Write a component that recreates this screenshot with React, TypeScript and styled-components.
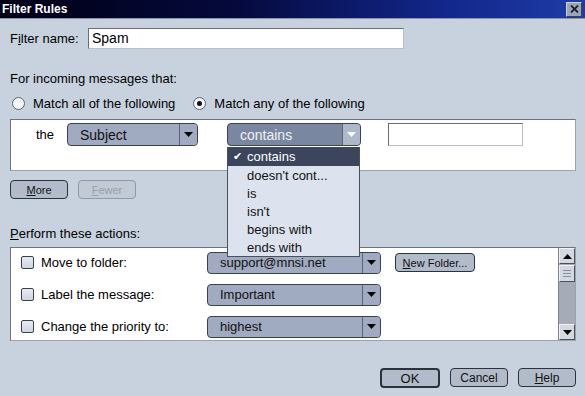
import React from 'react';
import styled, { createGlobalStyle } from 'styled-components';

const GlobalStyle = createGlobalStyle`
  html, body {
    margin: 0;
    padding: 0;
    background: #c7d2de;
  }
`;

const Window = styled.div`
  position: relative;
  width: 585px;
  height: 396px;
  background: #c7d2de;
  font-family: "Liberation Sans", Arial, sans-serif;
  font-size: 13px;
  color: #000;
  overflow: hidden;
`;

const TitleBar = styled.div`
  height: 18px;
  display: flex;
  align-items: center;
  justify-content: space-between;
  padding: 0 3px 0 2px;
  background: linear-gradient(to right, #000014 0%, #05093c 40%, #12268a 75%, #1e3ca6 100%);
  border-bottom: 1px solid #8a96a8;
`;

const Title = styled.span`
  color: #fff;
  font-weight: bold;
  font-size: 12px;
`;

const CloseBox = styled.div`
  width: 14px;
  height: 13px;
  background: #9aa6b4;
  border: 1px solid #c8d0da;
  border-right-color: #3a4250;
  border-bottom-color: #3a4250;
  display: flex;
  align-items: center;
  justify-content: center;
`;

const Body = styled.div`
  padding: 0 9px 0 10px;
  display: flex;
  flex-direction: column;
`;

const NameRow = styled.div`
  margin-top: 9px;
  display: flex;
  align-items: center;
  height: 20px;
`;

const NameLabel = styled.span`
  width: 78px;
`;

const TextBox = styled.div<{ $w: number; $h: number }>`
  width: ${p => p.$w}px;
  height: ${p => p.$h}px;
  box-sizing: border-box;
  background: #fff;
  border: 1px solid #6a6e74;
  border-right-color: #b8c0cc;
  border-bottom-color: #b8c0cc;
  display: flex;
  align-items: center;
  padding-left: 3px;
  font-size: 14px;
`;

const SectionLabel = styled.div<{ $top: number }>`
  margin-top: ${p => p.$top}px;
  height: 18px;
  line-height: 18px;
`;

const RadioRow = styled.div`
  height: 18px;
  margin-top: 6px;
  display: flex;
  align-items: center;
`;

const RadioItem = styled.label`
  display: flex;
  align-items: center;
  gap: 8px;
  margin-left: 2px;
  margin-right: 16px;
`;

const RadioCircle = styled.span<{ $on?: boolean }>`
  width: 11px;
  height: 11px;
  border-radius: 50%;
  border: 1px solid #5a6270;
  background: #f4f6fa;
  display: flex;
  align-items: center;
  justify-content: center;
  &::after {
    content: '';
    display: ${p => (p.$on ? 'block' : 'none')};
    width: 5px;
    height: 5px;
    border-radius: 50%;
    background: #111;
  }
`;

const ConditionBox = styled.div`
  margin-top: 7px;
  height: 52px;
  box-sizing: border-box;
  background: #fff;
  border: 1px solid #6e747c;
  border-right-color: #9aa2ac;
  border-bottom-color: #9aa2ac;
  padding: 3px 0 0 25px;
  display: flex;
  align-items: flex-start;
  position: relative;
`;

const TheLabel = styled.span`
  width: 31px;
  height: 23px;
  line-height: 23px;
`;

const Dropdown = styled.div<{ $w: number; $active?: boolean; $h?: number; $fs?: number }>`
  width: ${p => p.$w}px;
  height: ${p => p.$h ?? 23}px;
  box-sizing: border-box;
  display: flex;
  border: 1px solid #3c424c;
  border-radius: 4px;
  background: ${p => (p.$active ? '#7a87a0' : '#a0aac0')};
  color: ${p => (p.$active ? '#eef1f7' : '#111')};
  font-size: ${p => p.$fs ?? 14}px;
  overflow: hidden;
`;

const DropText = styled.span`
  flex: 1;
  padding-left: 12px;
  display: flex;
  align-items: center;
  white-space: nowrap;
  overflow: hidden;
`;

const DropArrow = styled.span<{ $active?: boolean }>`
  width: 17px;
  border-left: 1px solid ${p => (p.$active ? '#5a6478' : '#5c6474')};
  background: ${p => (p.$active ? '#aeb8cc' : '#a0aac0')};
  display: flex;
  align-items: center;
  justify-content: center;
`;

const Menu = styled.div`
  position: absolute;
  left: 227px;
  top: 147px;
  width: 133px;
  box-sizing: border-box;
  background: #dde2ef;
  border: 1px solid #4a505c;
  border-top: none;
  z-index: 5;
  font-size: 13px;
`;

const MenuItem = styled.div<{ $sel?: boolean }>`
  height: 18px;
  display: flex;
  align-items: center;
  padding-left: 5px;
  background: ${p => (p.$sel ? '#3b465c' : 'transparent')};
  color: ${p => (p.$sel ? '#fff' : '#111')};
  &:first-child {
    height: 19px;
  }
`;

const CheckSlot = styled.span`
  width: 14px;
  font-size: 11px;
`;

const ButtonRow = styled.div`
  margin-top: 9px;
  display: flex;
  gap: 10px;
  height: 19px;
`;

const Btn = styled.div<{ $w: number; $disabled?: boolean; $default?: boolean; $fs?: number }>`
  width: ${p => p.$w}px;
  height: ${p => (p.$default ? 20 : 19)}px;
  box-sizing: border-box;
  border: ${p => (p.$default ? 2 : 1)}px solid ${p => (p.$disabled ? '#9098a4' : '#2c323c')};
  border-radius: 4px;
  background: ${p => (p.$disabled ? '#c2cad6' : '#b2bbca')};
  color: ${p => (p.$disabled ? '#98a0ac' : '#111')};
  display: flex;
  align-items: center;
  justify-content: center;
  font-size: ${p => p.$fs ?? 12}px;
  white-space: nowrap;
`;

const U = styled.span`
  text-decoration: underline;
`;

const ActionsBox = styled.div`
  margin-top: 4px;
  height: 94px;
  width: 566px;
  box-sizing: border-box;
  background: #fff;
  border: 1px solid #6e747c;
  border-right-color: #9aa2ac;
  border-bottom-color: #9aa2ac;
  display: flex;
`;

const ActionList = styled.div`
  flex: 1;
  padding: 4px 0 0 10px;
  display: flex;
  flex-direction: column;
  gap: 11px;
`;

const ActionRow = styled.div`
  height: 21px;
  display: flex;
  align-items: center;
`;

const CheckBox = styled.span`
  width: 13px;
  height: 13px;
  box-sizing: border-box;
  border: 1px solid #3c4048;
  border-radius: 2px;
  background: linear-gradient(#e6eaf0, #cfd6e0);
  margin-right: 7px;
`;

const ActionLabel = styled.span`
  width: 166px;
  font-size: 13px;
`;

const NewFolderBtn = styled(Btn)`
  margin-left: 14px;
`;

const ScrollBar = styled.div`
  width: 16px;
  display: flex;
  flex-direction: column;
  background: #a6abb8;
  border-left: 1px solid #7a808c;
`;

const ScrollBtn = styled.div`
  height: 16px;
  box-sizing: border-box;
  background: #d4d8e0;
  border: 1px solid #f0f2f6;
  border-right-color: #4a505c;
  border-bottom-color: #4a505c;
  display: flex;
  align-items: center;
  justify-content: center;
`;

const Thumb = styled(ScrollBtn)`
  height: 17px;
  margin-top: 1px;
  flex-direction: column;
  gap: 2px;
`;

const Grip = styled.span`
  width: 8px;
  height: 1px;
  background: #8a909c;
`;

const Track = styled.div`
  flex: 1;
`;

const Footer = styled.div`
  margin-top: 27px;
  display: flex;
  justify-content: flex-end;
  gap: 10px;
`;

const Arrow = ({ color = '#000', up = false }: { color?: string; up?: boolean }) => (
  <svg width="9" height="5" viewBox="0 0 9 5">
    <polygon points={up ? '0,5 9,5 4.5,0' : '0,0 9,0 4.5,5'} fill={color} />
  </svg>
);

const App: React.FC = () => {
  const ops = ['contains', "doesn't cont...", 'is', "isn't", 'begins with', 'ends with'];
  const actions = [
    { label: 'Move to folder:', value: 'support@mnsi.net', folder: true },
    { label: 'Label the message:', value: 'Important' },
    { label: 'Change the priority to:', value: 'highest' },
  ];
  return (
    <Window>
      <GlobalStyle />
      <TitleBar>
        <Title>Filter Rules</Title>
        <CloseBox>
          <svg width="9" height="8" viewBox="0 0 9 8">
            <path d="M1 0.5 L8 7.5 M8 0.5 L1 7.5" stroke="#1c2230" strokeWidth="1.8" />
          </svg>
        </CloseBox>
      </TitleBar>
      <Body>
        <NameRow>
          <NameLabel>F<U>i</U>lter name:</NameLabel>
          <TextBox $w={316} $h={21}>Spam</TextBox>
        </NameRow>
        <SectionLabel $top={22}>For incoming messages that:</SectionLabel>
        <RadioRow>
          <RadioItem>
            <RadioCircle />
            Match all of the following
          </RadioItem>
          <RadioItem>
            <RadioCircle $on />
            Match any of the following
          </RadioItem>
        </RadioRow>
        <ConditionBox>
          <TheLabel>the</TheLabel>
          <Dropdown $w={131}>
            <DropText>Subject</DropText>
            <DropArrow>
              <Arrow />
            </DropArrow>
          </Dropdown>
          <Dropdown $w={134} $active style={{ marginLeft: 29 }}>
            <DropText>contains</DropText>
            <DropArrow $active>
              <Arrow color="#fff" />
            </DropArrow>
          </Dropdown>
          <TextBox $w={135} $h={23} style={{ marginLeft: 27 }} />
        </ConditionBox>
        <ButtonRow>
          <Btn $w={58} $fs={11}>
            <U>M</U>ore
          </Btn>
          <Btn $w={58} $fs={11} $disabled>
            <U>F</U>ewer
          </Btn>
        </ButtonRow>
        <SectionLabel $top={26}>
          <U>P</U>erform these actions:
        </SectionLabel>
        <ActionsBox>
          <ActionList>
            {actions.map(a => (
              <ActionRow key={a.label}>
                <CheckBox />
                <ActionLabel>{a.label}</ActionLabel>
                <Dropdown $w={174} $h={22} $fs={13}>
                  <DropText>{a.value}</DropText>
                  <DropArrow>
                    <Arrow />
                  </DropArrow>
                </Dropdown>
                {a.folder && (
                  <NewFolderBtn $w={80} $fs={11}>
                    <span>
                      <U>N</U>ew Folder...
                    </span>
                  </NewFolderBtn>
                )}
              </ActionRow>
            ))}
          </ActionList>
          <ScrollBar>
            <ScrollBtn>
              <Arrow up />
            </ScrollBtn>
            <Thumb>
              <Grip />
              <Grip />
              <Grip />
            </Thumb>
            <Track />
            <ScrollBtn>
              <Arrow />
            </ScrollBtn>
          </ScrollBar>
        </ActionsBox>
        <Footer>
          <Btn $w={60} $fs={13} $default>
            OK
          </Btn>
          <Btn $w={58}>Cancel</Btn>
          <Btn $w={58}>
            <U>H</U>elp
          </Btn>
        </Footer>
      </Body>
      <Menu>
        {ops.map((o, i) => (
          <MenuItem key={o} $sel={i === 0}>
            <CheckSlot>{i === 0 ? '✔' : ''}</CheckSlot>
            {o}
          </MenuItem>
        ))}
      </Menu>
    </Window>
  );
};

export default App;
